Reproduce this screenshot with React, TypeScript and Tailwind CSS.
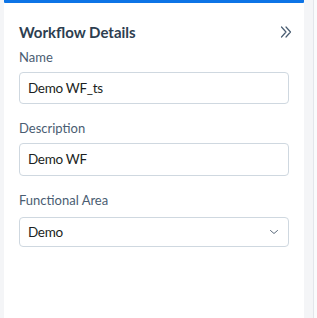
import React from "react";

function Field({ label, value, select, h, mt }: { label: string; value: string; select?: boolean; h: string; mt: string }) {
  return (
    <div className="flex flex-col">
      <div className="text-[13px] leading-[18px] text-[#4a5d72]">{label}</div>
      <div className={`${mt} ${h} flex items-center justify-between rounded-[4px] border border-[#cfd8e0] pl-[8px] pr-[9px]`}>
        <span className="text-[13.5px] font-normal tracking-[-0.3px] text-[#1c1f23]">{value}</span>
        {select && (
          <svg width="10" height="10" viewBox="0 0 10 10" fill="none">
            <path d="M1.5 3.5 5 6.5l3.5-3" stroke="#5b6b7c" strokeWidth="1" strokeLinecap="round" strokeLinejoin="round" />
          </svg>
        )}
      </div>
    </div>
  );
}

export default function App() {
  return (
    <div className="flex h-[318px] w-[317px] bg-[#f4f5f7]" style={{ fontFamily: "Lato, 'Noto Sans', sans-serif" }}>
      <div className="ml-[4px] flex w-[300px] flex-col bg-white">
        <div className="h-[3px] rounded-b-[1px] bg-[#0d74e6]" />
        <div className="flex flex-col px-[15px] pt-[18px]">
          <div className="flex items-center justify-between">
            <div className="text-[15px] font-bold leading-[22px] text-[#2d3e50]">Workflow Details</div>
            <svg width="12" height="12" viewBox="0 0 12 12" fill="none" className="mr-[-3px]">
              <path d="M1.5 1 6 6l-4.5 5M6 1l4.5 5L6 11" stroke="#4a5d72" strokeWidth="1.2" strokeLinecap="round" strokeLinejoin="round" />
            </svg>
          </div>
          <div className="mt-[5px] flex flex-col gap-[15px]">
            <Field label="Name" value="Demo WF_ts" h="h-[32px]" mt="mt-[6px]" />
            <Field label="Description" value="Demo WF" h="h-[33px]" mt="mt-[6px]" />
            <Field label="Functional Area" value="Demo" select h="h-[30px]" mt="mt-[8px]" />
          </div>
        </div>
      </div>
      <div className="ml-[9px] w-[1px] bg-[#e3e6ea]" />
      <div className="flex-1 bg-[#fafbfc]" />
    </div>
  );
}
